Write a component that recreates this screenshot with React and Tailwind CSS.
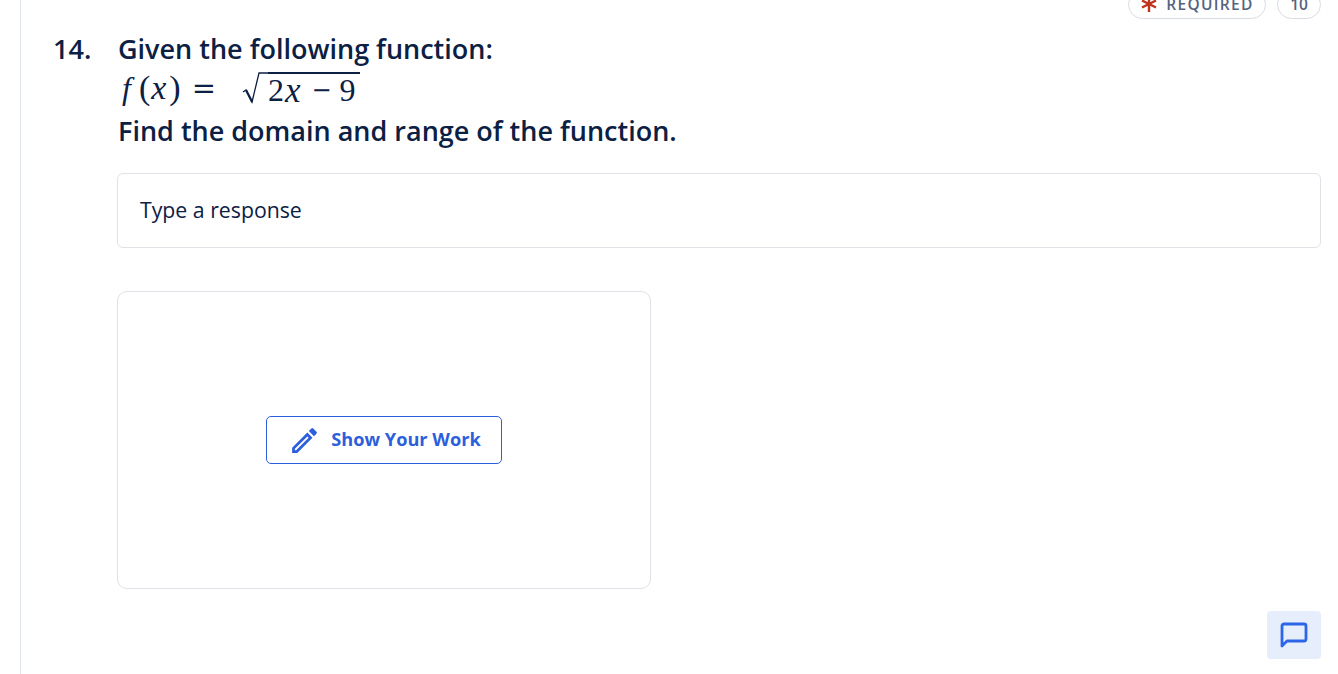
import React from 'react';

const Asterisk = () => (
  <svg width="16" height="14" viewBox="0 0 16 14" fill="none" stroke="#c0341d" strokeWidth="2.4">
    <path d="M8 0v14M1 2.5l14 7M15 2.5l-14 7" />
  </svg>
);

const Pencil = () => (
  <svg width="33" height="33" viewBox="0 0 24 24" fill="#2d5fdc">
    <path d="M3 17.25V21h3.75L17.81 9.94l-3.75-3.75L3 17.25zM5.92 19H5v-.92l9.06-9.06.92.92L5.92 19zM20.71 7.04a1 1 0 0 0 0-1.41l-2.34-2.34a1 1 0 0 0-1.41 0l-1.83 1.83 3.75 3.75 1.83-1.83z" />
  </svg>
);

const Comment = () => (
  <svg width="28" height="28" viewBox="0 0 28 28" fill="none">
    <path d="M2 25V5a2 2 0 0 1 2-2h20a2 2 0 0 1 2 2v13a2 2 0 0 1-2 2H7l-5 5z" stroke="#2d65e8" strokeWidth="2.8" strokeLinejoin="round" />
  </svg>
);

const Surd = () => (
  <svg width="26" height="40" viewBox="0 0 26 40" fill="none" className="shrink-0">
    <path d="M1 24l3-2 6 12 L17 5H26" stroke="#0c2044" strokeWidth="1.3" />
    <path d="M4 22l6.2 12" stroke="#0c2044" strokeWidth="2.2" />
  </svg>
);

const Formula = () => (
  <div className="flex items-start h-[40px] text-[#0c2044] font-['Liberation_Serif',serif] text-[32px] leading-[40px]">
    <span className="italic ml-[5px]">f</span>
    <span className="ml-[8px] text-[34px]">(</span>
    <span className="italic ml-[1px] text-[34px]">x</span>
    <span className="ml-[3px] text-[34px]">)</span>
    <span className="ml-[11px] font-['DejaVu_Serif',serif] text-[29px]">=</span>
    <span className="ml-[26px] flex">
      <Surd />
      <span className="mt-[4px] h-[36px] border-t-2 border-[#0c2044] leading-[33px] whitespace-nowrap flex w-[92px]">
        <span>2</span>
        <span className="italic text-[35px] ml-[1px]">x</span>
        <span className="ml-[11px] font-['DejaVu_Serif',serif] text-[24px]">−</span>
        <span className="ml-[8px]">9</span>
      </span>
    </span>
  </div>
);

export default function App() {
  return (
    <div className="h-[674px] w-[1338px] overflow-hidden bg-white font-['Open_Sans',sans-serif] text-[#0c2044]">
      <div className="ml-5 h-full border-l border-[#e3e6ec] flex flex-col relative">
        {/* top pills, cut off by the window */}
        <div className="flex justify-end gap-[11px] pr-[17px] -mt-[10px] h-[29px]">
          <div className="flex items-center gap-[9px] w-[138px] justify-center rounded-[16px] border border-[#d9dce3] pl-px text-[15.5px] tracking-[1.3px] font-semibold text-[#55637f]">
            <Asterisk />
            <span>REQUIRED</span>
          </div>
          <div className="flex items-center justify-center w-[44px] rounded-[16px] border border-[#d9dce3] text-[15.5px] font-semibold text-[#55637f]">
            10
          </div>
        </div>

        <div className="flex pl-[32px] mt-[11px]">
          <div className="w-[64px] text-[27px] leading-[37px] font-semibold">14.</div>
          <div className="flex-1 pr-[17px]">
            <div className="pl-px h-[38px] text-[27px] leading-[37px] font-semibold">Given the following function:</div>
            <Formula />
            <div className="pl-px text-[27px] leading-[45px] font-semibold">Find the domain and range of the function.</div>

            <div className="mt-[20px] h-[75px] rounded-[6px] border border-[#e0e2e7] flex items-center pl-[22px] pb-[2px] text-[21.25px]">
              Type a response
            </div>

            <div className="mt-[43px] w-[534px] h-[298px] rounded-[10px] border border-[#e0e2e7] flex items-center justify-center">
              <button className="w-[236px] h-[48px] rounded-[5px] border border-[#2d5fdc] flex items-center justify-center gap-[10px] pl-px text-[#2d5fdc] text-[18.2px] font-bold">
                <Pencil />
                <span>Show Your Work</span>
              </button>
            </div>
          </div>
        </div>

        {/* floating comment button */}
        <button className="absolute right-[17px] top-[611px] w-[54px] h-[48px] rounded-[4px] bg-[#e6eefb] flex items-center justify-center">
          <Comment />
        </button>
      </div>
    </div>
  );
}
